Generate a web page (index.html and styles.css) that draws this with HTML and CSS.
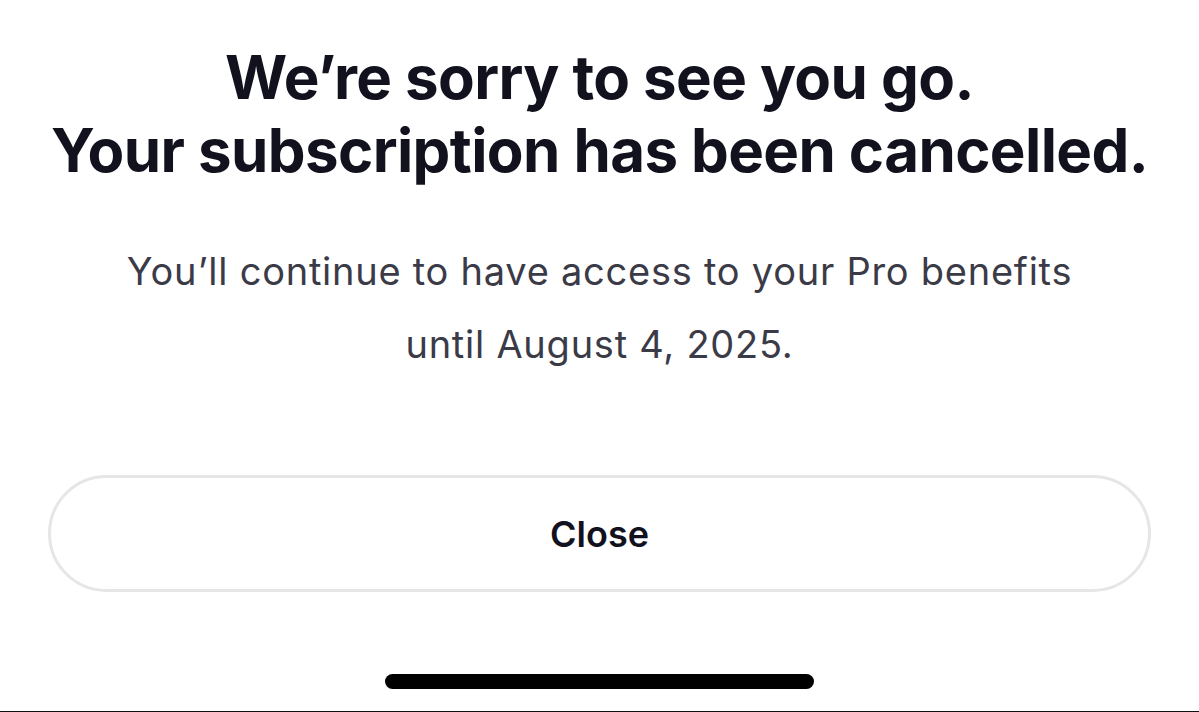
FILE: index.html
```
<!DOCTYPE html>
<html lang="en">
<head>
    <meta charset="UTF-8">
    <meta name="viewport" content="width=device-width, initial-scale=1.0">
    <title>Subscription cancelled</title>
    <link rel="stylesheet" href="styles.css">
</head>
<body>
    <div class="screen">
        <h1 class="title">We’re sorry to see you go.<br>Your subscription has been cancelled.</h1>
        <p class="note">You’ll continue to have access to your Pro benefits<br>until August 4, 2025.</p>
        <button class="close-button">Close</button>
        <div class="home-indicator"></div>
    </div>
</body>
</html>
```

FILE: styles.css
```
body {
    font-family: 'Inter', 'Liberation Sans', sans-serif;
    background: #ffffff;
    margin: 0;
    padding: 0;
}
.screen {
    height: 712px;
    box-sizing: border-box;
    padding: 41px 48px 0;
    border-bottom: 1px solid #111111;
    display: flex;
    flex-direction: column;
    align-items: center;
    overflow: hidden;
}
.title {
    margin: 0;
    font-size: 60px;
    line-height: 73px;
    font-weight: 700;
    color: #12121f;
    text-align: center;
    letter-spacing: -0.6px;
}
.note {
    margin: 48px 0 0;
    font-size: 38px;
    line-height: 73px;
    font-weight: 400;
    color: #3b3b48;
    text-align: center;
    letter-spacing: 0.75px;
}
.close-button {
    margin-top: 94px;
    width: 100%;
    height: 117px;
    border: 3px solid #e6e6e9;
    border-radius: 60px;
    background: #ffffff;
    font-family: inherit;
    font-size: 36px;
    font-weight: 600;
    color: #12121f;
    cursor: pointer;
}
.home-indicator {
    margin-top: 82px;
    width: 429px;
    height: 15px;
    border-radius: 8px;
    background: #000000;
}
```
